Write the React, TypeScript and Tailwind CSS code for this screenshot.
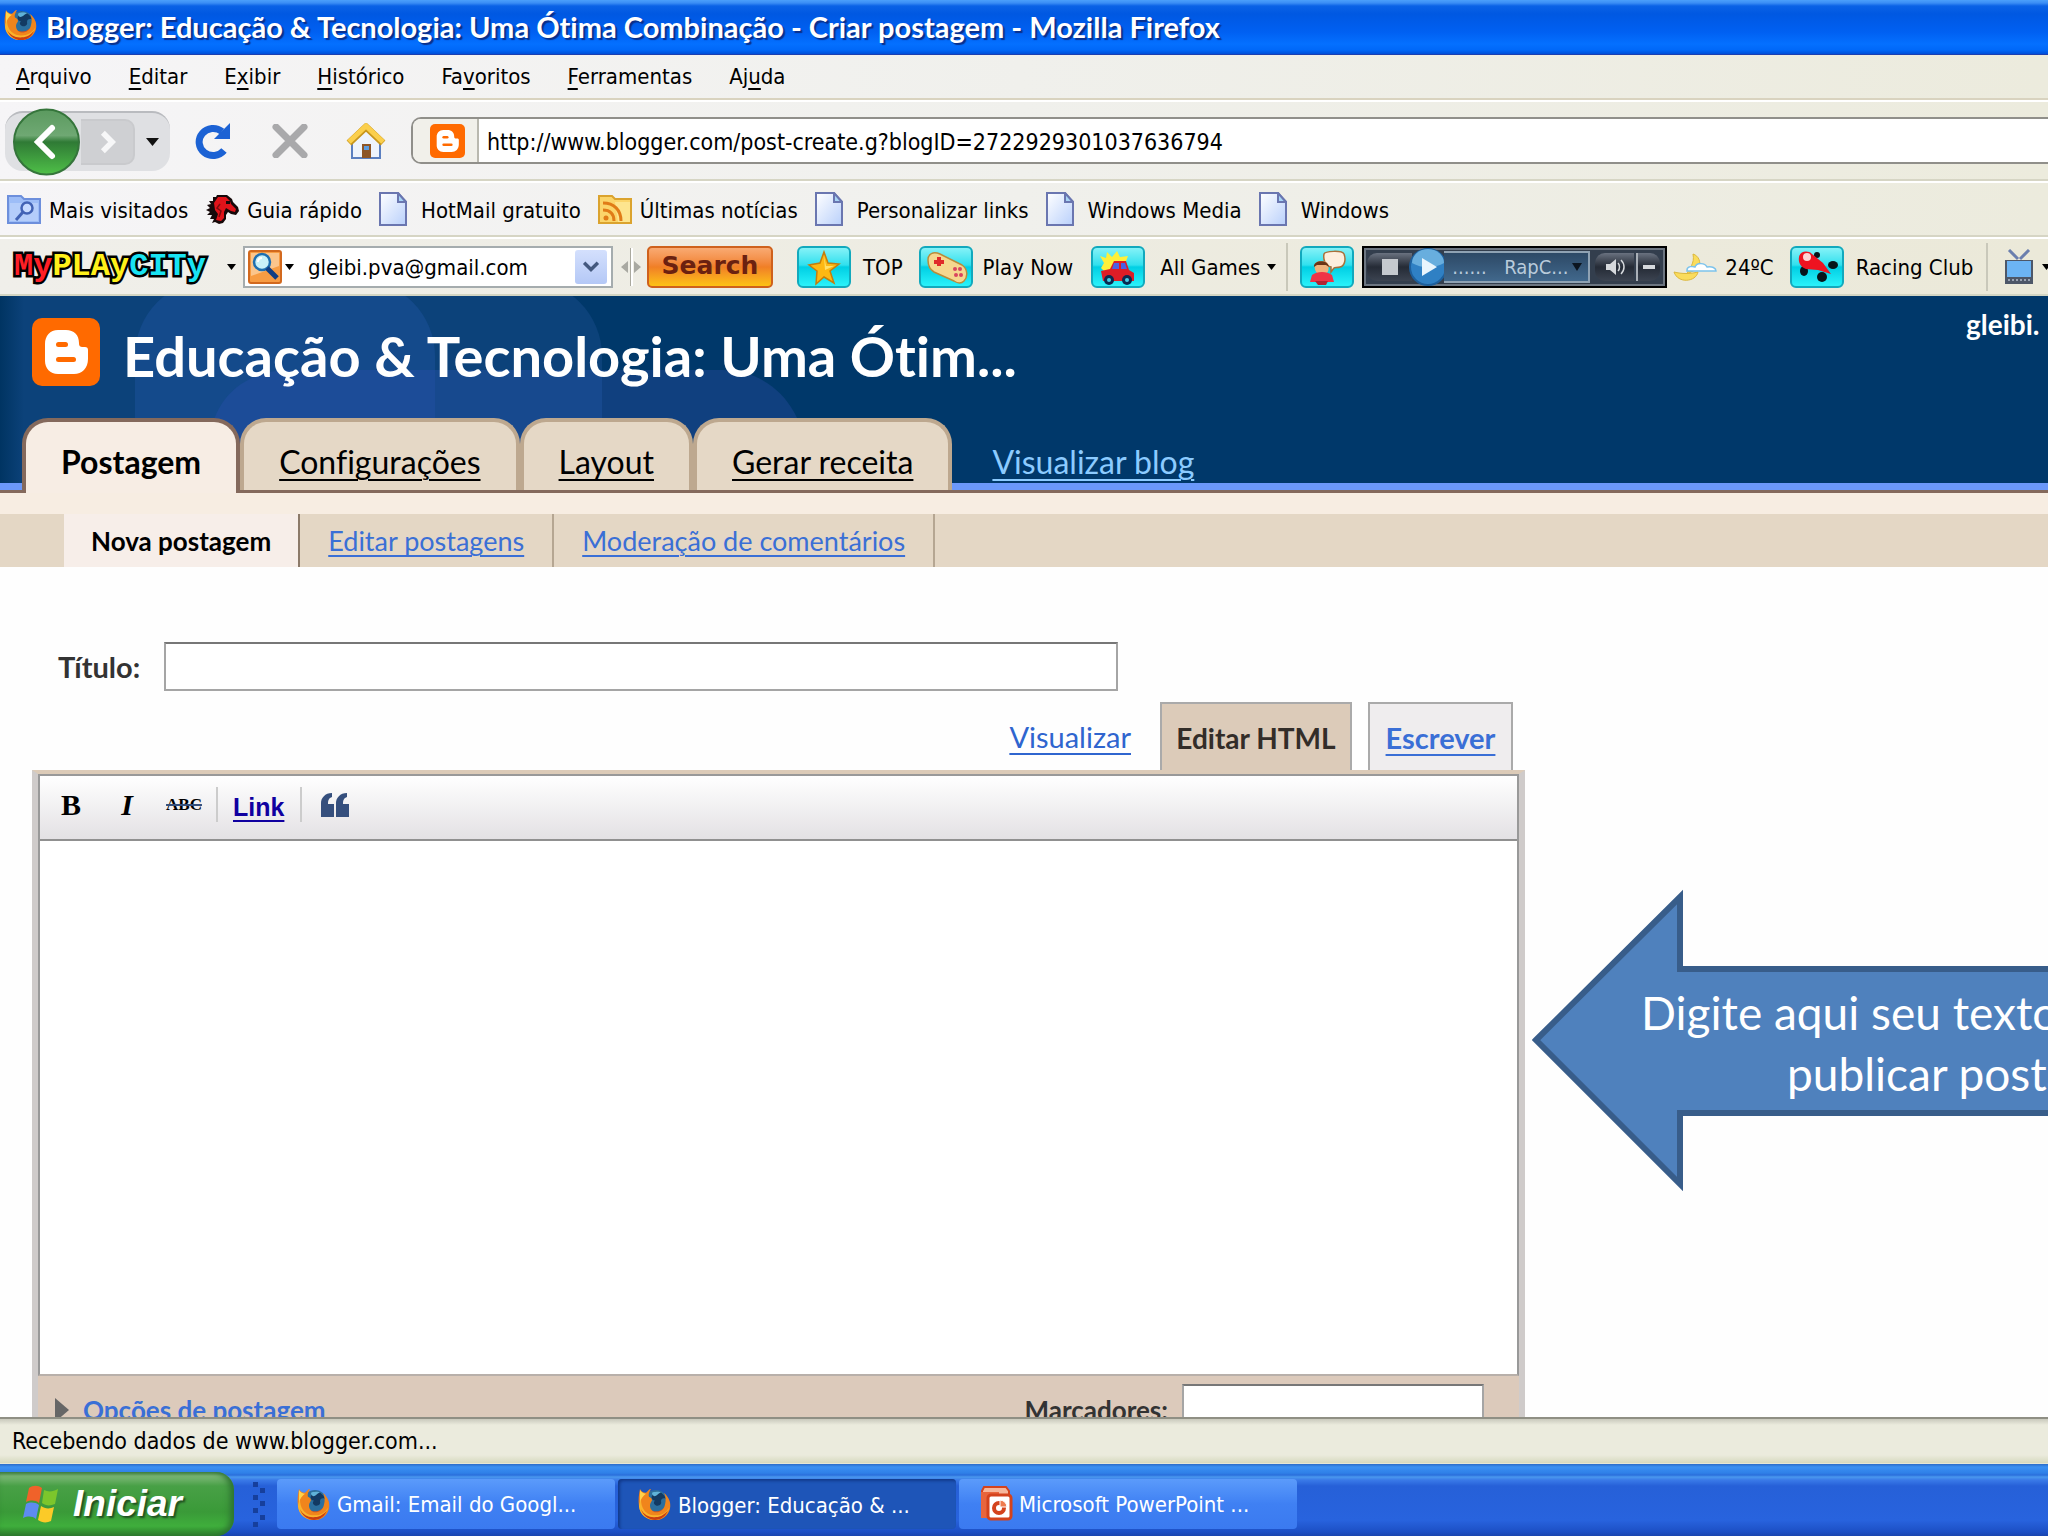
import React from "react";

const tahoma = "font-['DejaVu_Sans_Condensed','DejaVu_Sans',sans-serif]";
const trebuchet = "font-['Lato','Open_Sans',sans-serif] [font-variant-ligatures:none]";

function Firefox({ className }: { className: string }) {
  return (
    <svg viewBox="0 0 34 34" preserveAspectRatio="none" className={className} aria-hidden="true">
      <circle cx="17" cy="18" r="15" fill="#d9541a" />
      <circle cx="18" cy="13" r="11" fill="#2b6f9f" />
      <path d="M17 3c5 0 9 3 11 8-3-1-5 0-5 3 1 3-2 5-5 4-2-1-3-3-1-5-3 0-4-3-3-5z" fill="#123a63" />
      <path d="M14 5c3-2 7-2 9 0-2 0-3 2-5 3s-4 0-4-3z" fill="#5fb2d8" />
      <path d="M2 1c1 2 3 4 6 4 2-2 3-4 5-4-1 2-3 5-2 8 2 1 3 2 3 4-1 2-2 3-2 5 0 4 3 7 6 7 5 0 8-3 9-8 1-4 1-8-1-12 5 5 7 10 6 16-2 8-8 12-15 12S2 28 1 19C0 12 1 6 2 1z" fill="#f0851c" />
      <path d="M3 12c0 8 4 15 12 16 7 1 13-2 16-8-1 7-7 13-14 13C8 33 2 27 1 19c0-3 1-5 2-7z" fill="#f9b32c" />
      <path d="M3 22c3 6 9 9 15 8 5 0 9-3 12-7-2 6-7 10-13 10C10 33 5 28 3 22z" fill="#c93d12" />
      <path d="M2 2c1 2 4 4 6 4-3 2-5 5-6 9z" fill="#ffd24a" />
    </svg>
  );
}

function BloggerMark({ className }: { className: string }) {
  return (
    <svg viewBox="0 0 68 68" preserveAspectRatio="none" className={className} aria-hidden="true">
      <rect width="68" height="68" rx="10" fill="#ff6a00" />
      <path d="M26 12h8c8 0 13 5 13 13 0 3 1 4 4 4h2c2 0 3 1 3 3v9c0 9-6 15-14 15H26c-8 0-13-6-13-13V26c0-8 5-14 13-14z" fill="#fff" />
      <rect x="24" y="24" width="12" height="5" rx="2.500" fill="#ff6a00" />
      <rect x="24" y="39" width="20" height="5" rx="2.500" fill="#ff6a00" />
    </svg>
  );
}

function PageIcon() {
  return (
    <svg viewBox="0 0 28 34" className="h-[34px] w-7 shrink-0" aria-hidden="true">
      <defs>
        <linearGradient id="pg" x1="0" y1="0" x2="1" y2="1">
          <stop offset="0" stopColor="#fff" />
          <stop offset="1" stopColor="#b9d0fb" />
        </linearGradient>
      </defs>
      <path d="M1 1h18l8 9v23H1z" fill="url(#pg)" stroke="#6a76b0" strokeWidth="2" />
      <path d="M19 1v9h8z" fill="#a8d4f5" stroke="#6a76b0" strokeWidth="2" />
    </svg>
  );
}

function FolderSearch() {
  return (
    <svg viewBox="0 0 34 30" className="h-[30px] w-[34px] shrink-0" aria-hidden="true">
      <path d="M1 2h13l3 3h16v24H1z" fill="#9dbdf7" stroke="#6d8fdc" strokeWidth="2" />
      <path d="M3 9h28v18H3z" fill="#b4cdfa" />
      <circle cx="20" cy="14" r="5.500" fill="#c6daff" stroke="#4263b5" strokeWidth="2.500" />
      <path d="m16 18-7 8" stroke="#4263b5" strokeWidth="3" />
    </svg>
  );
}

function FolderFeed() {
  return (
    <svg viewBox="0 0 34 30" className="h-[30px] w-[34px] shrink-0" aria-hidden="true">
      <path d="M1 2h13l3 3h16v24H1z" fill="#fbd56a" stroke="#dba32e" strokeWidth="2" />
      <path d="M17 8h15v20H20z" fill="#fff0a8" opacity=".6" />
      <circle cx="8" cy="24" r="2.500" fill="#e07c17" />
      <path d="M5 16c7 0 11 4 11 11M5 9c11 0 18 7 18 18" fill="none" stroke="#e07c17" strokeWidth="3" />
    </svg>
  );
}

function Horse() {
  return (
    <svg viewBox="0 0 34 30" className="h-[30px] w-[34px] shrink-0" aria-hidden="true">
      <path d="M12 1h10l5 4 1 3 5 5 1 4-3 4-5-1-3-2-2 3v4l-3 4-4 1-4-2-3 1 2-4-4 0 2-4-5 0 3-3-4-2 4-2-3-3 4-1-2-3h4V3h3z" fill="#16090a" />
      <path d="M13 3h8l4 4 1 3 5 5-1 3-4-1-5-3-2 4v6l-3 3-5-1 2-6-3-4-1-7z" fill="#e0131a" />
      <path d="M21 7h4v3h-4z" fill="#16090a" />
      <path d="m15 10-3 4 4 3-2 6" stroke="#7c0b0f" strokeWidth="1.500" fill="none" />
    </svg>
  );
}

function Caret({ className }: { className: string }) {
  return (
    <svg viewBox="0 0 12 8" preserveAspectRatio="none" className={className} aria-hidden="true">
      <path d="M0 0h12L6 8z" fill="currentColor" />
    </svg>
  );
}

function Tile({ children }: { children: React.ReactNode }) {
  return (
    <svg viewBox="0 0 54 42" className="h-[42px] w-[54px] shrink-0" aria-hidden="true">
      <defs>
        <linearGradient id="tile" x1="0" y1="0" x2="0" y2="1">
          <stop offset="0" stopColor="#8af3f8" />
          <stop offset=".45" stopColor="#31e0ee" />
          <stop offset=".5" stopColor="#00cfe4" />
          <stop offset="1" stopColor="#2df4fb" />
        </linearGradient>
      </defs>
      <rect x="1" y="1" width="52" height="40" rx="5" fill="url(#tile)" stroke="#12a9bd" strokeWidth="2" />
      {children}
    </svg>
  );
}

const menu = [
  ["", "A", "rquivo"],
  ["", "E", "ditar"],
  ["E", "x", "ibir"],
  ["", "H", "istórico"],
  ["Fa", "v", "oritos"],
  ["", "F", "erramentas"],
  ["Aj", "u", "da"],
];

const bookmarks: { label: string; icon: React.ReactNode; gap: string }[] = [
  { label: "Mais visitados", icon: <FolderSearch />, gap: "gap-2" },
  { label: "Guia rápido", icon: <Horse />, gap: "gap-2" },
  { label: "HotMail gratuito", icon: <PageIcon />, gap: "gap-[14px]" },
  { label: "Últimas notícias", icon: <FolderFeed />, gap: "gap-2" },
  { label: "Personalizar links", icon: <PageIcon />, gap: "gap-[14px]" },
  { label: "Windows Media", icon: <PageIcon />, gap: "gap-[14px]" },
  { label: "Windows", icon: <PageIcon />, gap: "gap-[14px]" },
];

function NavigationBar() {
  return (
    <div className="flex h-[81px] items-center border-t-2 border-b-2 border-t-white border-b-[#d6d5c4]">
      <div className="relative ml-[5px] flex h-[60px] w-[165px] items-center rounded-[18px] border-t-2 border-[#b9bbbf] bg-[#dfe0e3]">
        <button aria-label="Voltar" className="relative -my-1 ml-[7px] h-[68px] w-[69px]">
          <svg viewBox="0 0 69 68" className="h-full w-full" aria-hidden="true">
            <defs>
              <linearGradient id="back" x1="0" y1="0" x2="0" y2="1">
                <stop offset="0" stopColor="#5b9a5f" />
                <stop offset=".4" stopColor="#6fa873" />
                <stop offset=".5" stopColor="#2f7a35" />
                <stop offset="1" stopColor="#4fc048" />
              </linearGradient>
            </defs>
            <circle cx="34.500" cy="34" r="32.500" fill="url(#back)" stroke="#35753b" strokeWidth="2" />
            <path d="M40 20 26 34l14 14" fill="none" stroke="#fff" strokeWidth="6" strokeLinecap="round" />
          </svg>
        </button>
        <button aria-label="Avançar" className="flex h-[46px] w-[54px] items-center justify-center rounded-r-[10px] border-2 border-l-0 border-[#c9cacd] bg-[#cfd0d3]">
          <svg viewBox="0 0 18 26" className="h-6 w-[17px]" aria-hidden="true">
            <path d="m4 3 10 10L4 23" fill="none" stroke="#f7f7f8" strokeWidth="6" />
          </svg>
        </button>
        <button aria-label="Histórico recente" className="ml-[11px] text-[#111]">
          <Caret className="h-2 w-[13px]" />
        </button>
      </div>
      <button aria-label="Recarregar" className="ml-[25px]">
        <svg viewBox="0 0 36 36" className="h-9 w-9" aria-hidden="true">
          <path d="M29 27.500A14 13.500 0 1 1 27 8.500" fill="none" stroke="#1c62d4" strokeWidth="7" />
          <path d="M35 0v16H19z" fill="#1c62d4" />
        </svg>
      </button>
      <button aria-label="Parar" className="ml-[41px]">
        <svg viewBox="0 0 36 34" className="h-[34px] w-9" aria-hidden="true">
          <path d="m4 3 28 28M32 3 4 31" stroke="#a9a9ab" strokeWidth="7" strokeLinecap="round" />
        </svg>
      </button>
      <button aria-label="Página inicial" className="ml-[38px]">
        <svg viewBox="0 0 40 36" className="h-9 w-10" aria-hidden="true">
          <path d="M6 17h28v18H6z" fill="#eef3fc" stroke="#5b7fc0" strokeWidth="2" />
          <path d="M20 7 8 19h24z" fill="#eef3fc" />
          <path d="m3 20 17-16 17 16" fill="none" stroke="#c8961c" strokeWidth="7" />
          <path d="m3 19 17-16 17 16" fill="none" stroke="#fbcf4c" strokeWidth="5" />
          <path d="M16 21h9v14h-9z" fill="#8d5527" />
          <path d="M18 23h5v4h-5z" fill="#5a9be0" />
        </svg>
      </button>
      <div className="ml-[25px] flex h-[47px] flex-1 items-center overflow-hidden rounded-l-[10px] border-2 border-r-0 border-[#908f8a] bg-white">
        <div className="flex h-full w-[66px] items-center justify-center border-r-2 border-[#b9b8af] bg-[#f1f0ea] pl-1">
          <BloggerMark className="h-[34px] w-[35px]" />
        </div>
        <input aria-label="Endereço" defaultValue="http://www.blogger.com/post-create.g?blogID=2722929301037636794" className="h-full min-w-0 flex-1 px-2 pt-[2px] text-[23px] outline-none" />
      </div>
    </div>
  );
}

function GamesToolbar() {
  return (
    <div className="flex h-[59px] items-center overflow-hidden border-t-2 border-b-2 border-t-white border-b-[#d3d5c3] bg-gradient-to-r from-[#f0efea] to-[#ebe9d9] whitespace-nowrap">
      <div className="ml-[13px] flex w-[194px] shrink-0 justify-center font-['Liberation_Mono',monospace] text-[32px] leading-9 font-bold [-webkit-text-stroke:5px_#000] [paint-order:stroke_fill]">
        <span className="text-[#ff1f26]">My</span>
        <span className="text-[#fff01a]">PLAy</span>
        <span className="text-[#19e3f2]">CITy</span>
      </div>
      <button aria-label="Menu MyPlayCity" className="ml-5"><Caret className="h-[6px] w-[9px]" /></button>
      <div className="ml-[7px] flex h-[42px] w-[370px] shrink-0 items-center border-2 border-[#a5acae] bg-white pl-[3px]">
        <svg viewBox="0 0 34 34" className="h-[34px] w-[34px] shrink-0" aria-hidden="true">
          <rect x="1" y="1" width="32" height="32" rx="2" fill="#f79c43" stroke="#d2691e" strokeWidth="2" />
          <path d="M3 3h28v13L3 26z" fill="#fbc58c" />
          <circle cx="14" cy="12" r="8" fill="#c9f1f8" stroke="#1f6fb0" strokeWidth="2.500" />
          <path d="m19 18 10 10" stroke="#113e83" strokeWidth="5" />
          <path d="M10 12c0-3 2-4 4-4" stroke="#fff" strokeWidth="2" fill="none" />
        </svg>
        <Caret className="ml-[3px] h-[6px] w-[9px] shrink-0" />
        <input aria-label="Pesquisar" defaultValue="gleibi.pva@gmail.com" className="ml-[14px] w-[267px] shrink-0 pt-[2px] text-[22px] outline-none" />
        <button aria-label="Abrir sugestões" className="flex h-[34px] w-8 shrink-0 items-center justify-center rounded-[3px] bg-gradient-to-b from-[#d4e0fd] to-[#b4c8f6]">
          <svg viewBox="0 0 20 14" className="h-3 w-[18px]" aria-hidden="true"><path d="m2 2 8 8 8-8" fill="none" stroke="#44597f" strokeWidth="4" /></svg>
        </button>
      </div>
      <svg viewBox="0 0 20 38" className="ml-2 h-[38px] w-5 shrink-0" aria-hidden="true">
        <path d="M7 13v12l-7-6zM13 13v12l7-6z" fill="#a9a9a2" />
        <path d="M9 0h1v38H9z" fill="#aaa99e" />
        <path d="M10 0h2v38h-2z" fill="#fff" />
      </svg>
      <button className="ml-[6px] flex h-[42px] w-[126px] shrink-0 items-center justify-center rounded-[5px] border-2 border-[#cf611c] bg-gradient-to-b from-[#f9aa72] via-[#f07f25] to-[#fcc214] pb-[2px] font-['DejaVu_Sans',sans-serif] text-[25px] leading-8 font-bold text-[#6b2110]">
        Search
      </button>
      <button className="ml-6 flex shrink-0 items-center gap-3">
        <Tile>
          <path d="m27 6 4 11 11 1-9 7 4 12-10-6-8 7 1-13-8-6 11-2z" fill="#fdb813" stroke="#c47d0d" strokeWidth="1.500" />
          <path d="m27 10 2 10 8 0-9 4z" fill="#ffe169" />
        </Tile>
        <span className="pt-[2px]">TOP</span>
      </button>
      <button className="ml-4 flex shrink-0 items-center gap-[10px]">
        <Tile>
          <path d="M9 14c0-6 5-9 12-6l22 11c6 4 6 12 2 16-3 3-7 2-10 0L15 26c-5-3-6-7-6-12z" fill="#f5d78f" stroke="#b98d3b" strokeWidth="1.500" />
          <path d="M20 11v9M15 16h10" stroke="#e02a2a" strokeWidth="4" />
          <g fill="#d9455f"><circle cx="36" cy="23" r="2" /><circle cx="41" cy="23" r="2" /><circle cx="37" cy="29" r="2" /><circle cx="42" cy="29" r="2" /></g>
        </Tile>
        <span className="pt-[2px]">Play Now</span>
      </button>
      <button className="ml-[18px] flex shrink-0 items-center gap-[15px]">
        <Tile>
          <path d="m9 10 6 2 1-6 5 5 5-6 3 6 8-1-3 8 2 6-9 2-13 0-4-4 3-5z" fill="#fff03a" />
          <path d="M10 25l9-2 4-8h12l3 9 5 3v8H12z" fill="#dc1d26" />
          <path d="M23 17h5v6h-7zM30 17h4l2 6h-6z" fill="#4a62e4" />
          <circle cx="18" cy="34" r="5" fill="#0a2a50" /><circle cx="36" cy="34" r="5" fill="#0a2a50" />
          <circle cx="18" cy="34" r="2" fill="#48d0e8" /><circle cx="36" cy="34" r="2" fill="#48d0e8" />
        </Tile>
        <span className="pt-[2px]">All Games</span>
        <Caret className="-ml-2 h-[6px] w-[9px]" />
      </button>
      <span className="ml-[10px] h-12 w-[2px] shrink-0 bg-[#c9c8ba]" />
      <button aria-label="Chat" className="ml-3 shrink-0">
        <Tile>
          <path d="M24 8c1-3 18-4 20 0 2 5 1 12-4 13-3 1-5 0-6 1l-3 4v-5c-6-1-8-8-7-13z" fill="#fdeedd" stroke="#a8703a" strokeWidth="1.500" />
          <path d="M15 18c1-4 12-4 13 0 1 3 1 7-1 9H17c-2-2-3-6-2-9z" fill="#f0b27c" />
          <path d="M14 21c-1-7 14-8 15 0l-3-2H17z" fill="#6b3517" />
          <path d="M12 29c5-4 15-4 20 0l2 7H10z" fill="#ef3446" />
          <path d="M15 35h13l-2 4h-8z" fill="#b12433" />
        </Tile>
      </button>
      <div className="ml-2 flex h-[42px] w-[305px] shrink-0 items-center border-2 border-black bg-[#333e4d] pl-[3px] text-[#b9cbdb] shadow-[inset_0_0_0_2px_#6d7681]">
        <button aria-label="Parar música" className="flex h-7 w-[45px] shrink-0 items-center justify-center rounded-l-[10px] bg-gradient-to-b from-[#6a7280] via-[#252b36] to-[#3c4451]">
          <span className="h-4 w-4 bg-[#c5c9ce]" />
        </button>
        <button aria-label="Tocar" className="-mx-[3px] shrink-0">
          <svg viewBox="0 0 38 38" className="h-[38px] w-[38px]" aria-hidden="true">
            <circle cx="19" cy="19" r="18" fill="#2f80c4" stroke="#1d5f9c" strokeWidth="2" />
            <path d="M3 15a16 14 0 0 1 32 0c-8 5-22 6-32 0z" fill="#68aede" />
            <path d="M13 10v18l15-9z" fill="#e9f5fd" />
          </svg>
        </button>
        <div className="flex h-8 w-[146px] shrink-0 items-center justify-between border-2 border-l-0 border-[#8fa2b3] bg-gradient-to-b from-[#2d4966] to-[#41688c] pr-[6px] pl-2 text-[20px] leading-7">
          <span>......</span>
          <span className="flex items-center gap-1">RapC...<Caret className="h-2 w-[10px] text-[#0c1520]" /></span>
        </div>
        <button aria-label="Volume" className="ml-[5px] flex h-7 w-[39px] shrink-0 items-center justify-center rounded-l-[10px] bg-gradient-to-b from-[#6a7280] via-[#252b36] to-[#3c4451]">
          <svg viewBox="0 0 20 20" className="h-5 w-5" aria-hidden="true">
            <path d="M1 7h4l6-5v16l-6-5H1z" fill="#d5d8dc" />
            <path d="M13 6c2 2 2 6 0 8M16 3c4 4 4 10 0 14" fill="none" stroke="#d5d8dc" strokeWidth="1.500" />
          </svg>
        </button>
        <button aria-label="Minimizar" className="ml-[2px] flex h-7 w-6 shrink-0 items-center justify-center rounded-r-[10px] border-l-2 border-[#aab0b8] bg-gradient-to-b from-[#6a7280] via-[#252b36] to-[#3c4451]">
          <span className="h-1 w-3 bg-[#d5d8dc]" />
        </button>
      </div>
      <svg viewBox="0 0 44 30" className="ml-[6px] h-[30px] w-11 shrink-0" aria-hidden="true">
        <path d="M20 2c6 2 8 8 6 14l-12 6c2-6 8-10 6-20z" fill="#fadc5c" stroke="#dcb83c" />
        <path d="M1 20c8 2 16 2 24 0-2 10-20 12-24 0z" fill="#fadc5c" stroke="#dcb83c" />
        <path d="M14 18c0-4 6-4 8-3 2-5 10-4 12 0 5-1 9 1 9 4H14z" fill="#fff" stroke="#7cc3ec" strokeWidth="1.500" />
      </svg>
      <span className="ml-2 pt-[2px]">24ºC</span>
      <button className="ml-4 flex shrink-0 items-center gap-3">
        <Tile>
          <g fill="#07151a"><ellipse cx="14" cy="25" rx="4" ry="5" /><ellipse cx="27" cy="9" rx="3" ry="3" /><ellipse cx="43" cy="19" rx="5" ry="4" /><ellipse cx="32" cy="31" rx="5" ry="5" /></g>
          <path d="M9 11c1-6 9-7 13-3l11 9 8 11-13-4-12-1c-5-2-8-6-7-12z" fill="#ee1320" />
          <circle cx="17" cy="11" r="4" fill="#ffd5d5" />
        </Tile>
        <span className="pt-[2px]">Racing Club</span>
      </button>
      <span className="ml-[13px] h-12 w-[2px] shrink-0 bg-[#c9c8ba]" />
      <button aria-label="TV" className="ml-4 flex shrink-0 items-center gap-2">
        <svg viewBox="0 0 30 36" className="h-9 w-[30px]" aria-hidden="true">
          <path d="m5 1 9 9M25 1l-9 9" stroke="#6b7fae" strokeWidth="3" />
          <rect x="1" y="11" width="28" height="24" fill="#4d5768" />
          <rect x="3" y="12" width="24" height="16" fill="#6cb4f4" />
          <path d="M4 31h22" stroke="#9aa3b2" strokeWidth="2" strokeDasharray="2 2" />
        </svg>
        <Caret className="h-[6px] w-[9px]" />
      </button>
    </div>
  );
}

function Tab({ children }: { children: React.ReactNode }) {
  return (
    <a href="#" className="flex h-[72px] items-end rounded-t-[26px] border-4 border-b-0 border-[#bda88f] bg-[#e5d8c6] px-[35px] pb-[10px] leading-9 text-black">
      <span className="underline decoration-2 underline-offset-[5px]">{children}</span>
    </a>
  );
}

function BloggerHeader() {
  return (
    <header className={`relative shrink-0 overflow-hidden bg-[#00386a] ${trebuchet}`}>
      <svg viewBox="0 0 960 197" className="absolute top-0 left-0 h-[197px] w-[960px]" aria-hidden="true">
        <defs>
          <linearGradient id="edge" x1="0" y1="0" x2="1" y2="0">
            <stop offset="0" stopColor="#003462" />
            <stop offset="1" stopColor="#0c427a" />
          </linearGradient>
        </defs>
        <rect x="-100" y="-16" width="702" height="300" rx="76" fill="#0c427a" />
        <rect x="0" y="0" width="24" height="197" fill="url(#edge)" />
        <path d="M602 74h120c50 0 84 40 84 90v40H602z" fill="#10407f" />
        <rect x="435" y="74" width="167" height="140" fill="#17498e" />
        <rect x="135" y="-16" width="300" height="300" rx="76" fill="#144a8b" />
        <path d="M290 74h145v140H209v-60c0-50 35-80 81-80z" fill="#1c4c98" />
      </svg>
      <div className="relative flex h-[122px] items-start">
        <BloggerMark className="mt-[22px] ml-8 h-[68px] w-[68px]" />
        <h1 className="mt-[26px] ml-[23px] flex-1 text-[56px] leading-[68px] font-bold whitespace-nowrap text-white">Educação &amp; Tecnologia: Uma Ótim...</h1>
        <span className="mt-3 w-[82px] text-[28px] leading-8 font-bold whitespace-nowrap text-white">gleibi.</span>
      </div>
      <nav aria-label="Blog" className="relative flex h-[75px] items-start text-[32px]">
        <div className="absolute inset-x-0 bottom-0 h-[10px] border-b-[3px] border-[#84695c] bg-[#6b98fa]" />
        <a href="#" className="relative ml-[22px] flex h-[75px] items-end rounded-t-[26px] border-4 border-b-0 border-[#84695c] bg-[#f7ede4] px-[35px] pb-[13px] leading-9 font-bold text-black">Postagem</a>
        <div className="relative flex">
          <Tab>Configurações</Tab>
          <Tab>Layout</Tab>
          <Tab>Gerar receita</Tab>
        </div>
        <a href="#" className="relative mt-[26px] ml-10 leading-9 text-[#8ccbff] underline decoration-2 underline-offset-[5px]">Visualizar blog</a>
      </nav>
    </header>
  );
}

function SubNavigation() {
  const link = "flex h-full items-center border-r-2 border-[#b5a692] px-[28px] pt-[2px] text-[#3a6fd6] underline decoration-2 underline-offset-4";
  return (
    <div className={`shrink-0 bg-[#f7ede2] pt-[21px] ${trebuchet}`}>
      <nav aria-label="Postagem" className="flex h-[53px] items-center bg-[#e4d7c5] pl-16 text-[27px]">
        <span className="flex h-full items-center border-r-2 border-[#8c7a69] bg-[#f7eee9] px-[27px] pt-[2px] text-[26px] font-bold text-black">Nova postagem</span>
        <a href="#" className={link}>Editar postagens</a>
        <a href="#" className={link}>Moderação de comentários</a>
      </nav>
    </div>
  );
}

function Editor() {
  return (
    <form className={`flex min-h-0 flex-1 flex-col pl-8 ${trebuchet}`}>
      <div className="mt-[75px] flex items-center">
        <label htmlFor="titulo" className="ml-[26px] w-[106px] text-[29px] font-bold text-[#333]">Título:</label>
        <input id="titulo" className="h-[49px] w-[954px] border-2 border-[#a5a5a5] border-t-[#777] bg-white px-2 text-[26px]" />
      </div>
      <div className="mt-[11px] flex h-[68px] w-[1481px] items-stretch justify-end">
        <a href="#" className="mr-[29px] self-center pt-[2px] text-[29px] text-[#2f65cf] underline decoration-2 underline-offset-[5px]">Visualizar</a>
        <button type="button" className="mr-4 flex w-[192px] items-center justify-center border-2 border-b-0 border-[#aaa] bg-[#dccbb9] pt-[2px] text-[28px] font-bold text-[#332d29]">Editar HTML</button>
        <button type="button" className="flex w-[145px] items-center justify-center border-2 border-b-0 border-[#aaa] bg-[#efedee] pt-[2px] text-[29px] font-bold text-[#3a6fd6] underline decoration-2 underline-offset-[5px]">Escrever</button>
      </div>
      <div className="flex min-h-0 w-[1493px] flex-1 flex-col border-x-[6px] border-t-4 border-x-[#cfcbca] border-t-[#dccbb8] bg-[#dccabb]">
        <div className="flex min-h-0 flex-1 flex-col border-2 border-[#999] border-b-[#b8b0aa]">
          <div className="flex h-[65px] shrink-0 items-center border-b-2 border-[#909090] bg-gradient-to-b from-white to-[#e3e1e4] pb-[6px]">
            <button type="button" aria-label="Negrito" className="ml-[21px] w-5 font-['Liberation_Serif',serif] text-[30px] font-bold text-black">B</button>
            <button type="button" aria-label="Itálico" className="ml-[38px] w-4 font-['Liberation_Serif',serif] text-[30px] font-bold text-black italic">I</button>
            <button type="button" aria-label="Tachado" className="ml-[31px] w-9 font-['Liberation_Serif',serif] text-[17px] font-bold text-black line-through decoration-[#35507c] decoration-2">ABC</button>
            <span className="ml-[14px] h-[35px] w-[2px] bg-[#ccc]" />
            <button type="button" className="ml-[15px] pt-[6px] font-['Liberation_Sans',sans-serif] text-[25px] font-bold text-[#1000a0] underline decoration-2 underline-offset-4">Link</button>
            <span className="ml-4 h-[35px] w-[2px] bg-[#ccc]" />
            <button type="button" aria-label="Citação" className="ml-[19px]">
              <svg viewBox="0 0 28 24" className="h-6 w-7" aria-hidden="true">
                <path d="M0 24V10C0 5 4 0 11 0v4C8 5 7 7 7 11h6v13zM15 24V10c0-5 4-10 11-10v4c-3 1-4 3-4 7h6v13z" fill="#354f7d" />
              </svg>
            </button>
          </div>
          <textarea aria-label="Texto da postagem" className="min-h-0 flex-1 resize-none bg-white p-3 text-[26px] outline-none" />
        </div>
        <div className="flex h-[41px] shrink-0 items-start overflow-hidden pt-2 pl-[17px] text-[26px] leading-9 font-bold">
          <svg viewBox="0 0 14 24" className="mt-[14px] h-6 w-[14px]" aria-hidden="true"><path d="M0 0v24l14-12z" fill="#666" /></svg>
          <a href="#" className="mt-2 ml-[14px] text-[#3a6fd6]">Opções de postagem</a>
          <label htmlFor="marcadores" className="mt-2 mr-[14px] ml-auto text-[#333]">Marcadores:</label>
          <input id="marcadores" className="mr-[35px] h-12 w-[302px] border-2 border-[#a5a5a5] border-t-[#777] bg-white" />
        </div>
      </div>
    </form>
  );
}

function ArrowCallout() {
  return (
    <div className="absolute top-[593px] right-0 left-[1532px] h-[302px] overflow-hidden">
      <svg viewBox="0 0 700 302" className="absolute top-0 left-0 h-[302px] w-[700px]" aria-hidden="true">
        <path d="M4 151 148 8v72h600v144H148v71z" fill="#4f81bd" stroke="#385d8a" strokeWidth="6" />
      </svg>
      <p className="relative pt-[93px] pl-[109px] font-['Lato',sans-serif] text-[46px] leading-[61px] whitespace-nowrap text-white">
        Digite aqui seu texto
        <br />
        <span className="pl-[146px]">publicar postagem</span>
      </p>
    </div>
  );
}

function WindowsFlag() {
  return (
    <svg viewBox="0 0 40 40" className="h-10 w-10" aria-hidden="true">
      <path d="M7 4c4-3 9-3 13 0l-3 15c-4-3-8-3-13-1z" fill="#f0622a" />
      <path d="M22 6c4 2 9 2 14-1l-3 15c-5 2-9 2-13-1z" fill="#7cc62c" />
      <path d="M4 20c4-2 9-2 13 1l-3 14c-4-3-8-3-13-1z" fill="#5e8bf0" />
      <path d="M19 22c4 3 9 3 13 1l-3 14c-4 2-9 2-13-1z" fill="#fbca28" />
    </svg>
  );
}

function Taskbar() {
  const item = "flex h-[50px] w-[338px] items-center gap-[6px] rounded-[4px] pl-5 text-white";
  return (
    <footer className="flex h-[72px] shrink-0 items-end bg-[linear-gradient(180deg,#2a6bc8_0px,#3a90f2_3px,#2f80e8_9px,#2a6fdc_11px,#4a98ee_13px,#3a7ae8_16px,#2660d8_22px,#2863de_56px,#1c4fc4_68px,#1a45ae_72px)] text-[22px]">
      <button className="flex h-16 w-[234px] items-center rounded-r-[18px] bg-[linear-gradient(180deg,#4f8a4c_0px,#7db877_4px,#48a046_14px,#3a9a38_40px,#3fae3c_54px,#2c7c2c_64px)] pl-[22px] shadow-[inset_-4px_0_6px_#2d7330]">
        <WindowsFlag />
        <span className="ml-[11px] font-['Liberation_Sans',sans-serif] text-[37px] leading-10 font-bold text-white italic [text-shadow:2px_2px_2px_#1f4f20]">Iniciar</span>
      </button>
      <svg viewBox="0 0 14 46" className="mb-2 ml-[19px] h-[46px] w-[14px]" aria-hidden="true">
        <g fill="#163f9c">
          <path d="M0 0h5v5H0zM7 6h5v5H7zM0 13h5v5H0zM7 19h5v5H7zM0 26h5v5H0zM7 33h5v5H7zM0 40h5v5H0z" />
        </g>
      </svg>
      <div className="mb-[7px] ml-[10px] flex gap-[3px]">
        <button className={`${item} bg-gradient-to-b from-[#5b9bfb] via-[#3f80f3] to-[#3b7af0]`}><Firefox className="h-[33px] w-[34px]" />Gmail: Email do Googl...</button>
        <button className={`${item} bg-[#1e55b8] shadow-[inset_2px_2px_3px_#123a8c]`}><Firefox className="h-[33px] w-[34px]" /><span className="mt-[3px]">Blogger: Educação &amp; ...</span></button>
        <button className={`${item} bg-gradient-to-b from-[#5b9bfb] via-[#3f80f3] to-[#3b7af0]`}>
          <svg viewBox="0 0 34 36" className="h-9 w-[34px]" aria-hidden="true">
            <path d="M5 1h22l3 4v8H3V5z" fill="#f6b79c" stroke="#d4431d" strokeWidth="2" />
            <path d="M2 6h18v26H2z" fill="#e8653c" />
            <rect x="9" y="9" width="23" height="24" rx="3" fill="#fff" stroke="#d4431d" strokeWidth="3" />
            <circle cx="20" cy="22" r="5" fill="none" stroke="#d4431d" strokeWidth="4" />
            <path d="M21 14a8 8 0 0 1 7 7h-7z" fill="#ee7b4f" stroke="#fff" />
          </svg>
          Microsoft PowerPoint ...
        </button>
      </div>
    </footer>
  );
}

export default function App() {
  return (
    <div className={`flex h-screen flex-col overflow-hidden bg-white text-[22px] text-black ${tahoma}`}>
      <div className="flex h-[55px] shrink-0 items-center gap-2 border-b border-[#1c3fb0] bg-[linear-gradient(180deg,#4ba0fb_0px,#3a8df5_3px,#0a62e6_6px,#0058e2_14px,#0060f2_32px,#0470ff_44px,#0068f8_50px,#0048d0_55px)] pl-1">
        <Firefox className="mb-1 h-8 w-[34px]" />
        <span className={`text-[29px] leading-9 font-bold whitespace-nowrap text-white [text-shadow:2px_2px_1px_#0a2f8a] ${trebuchet}`}>
          Blogger: Educação &amp; Tecnologia: Uma Ótima Combinação - Criar postagem - Mozilla Firefox
        </span>
      </div>
      <div className="shrink-0 bg-gradient-to-r from-[#f6f5f7] via-[#f0f0ec] to-[#ecebdd]">
        <div role="menubar" className="flex h-[45px] items-center gap-[37px] border-b-2 border-[#d9d3bf] pl-4">
          {menu.map(([before, key, after]) => (
            <button key={after} role="menuitem">{before}<span className="underline decoration-2 underline-offset-4">{key}</span>{after}</button>
          ))}
        </div>
        <NavigationBar />
        <div className="flex h-14 items-center gap-[17px] border-t-2 border-b-2 border-t-white border-b-[#d6d5c4] pl-[7px] whitespace-nowrap">
          {bookmarks.map((b) => (
            <a key={b.label} href="#" className={`flex items-center ${b.gap}`}>{b.icon}<span className="pt-[2px]">{b.label}</span></a>
          ))}
        </div>
        <GamesToolbar />
      </div>
      <main className="relative flex min-h-0 flex-1 flex-col overflow-hidden bg-[#fefefe]">
        <BloggerHeader />
        <SubNavigation />
        <Editor />
        <ArrowCallout />
      </main>
      <div role="status" className="flex h-[47px] shrink-0 items-center border-t-2 border-[#8f8f84] bg-[linear-gradient(180deg,#c9c9bc_0px,#ebebdd_6px,#ebebdd_36px,#d6d9be_44px,#f4f4ec_45px)] pl-3 text-[23px]">
        Recebendo dados de www.blogger.com...
      </div>
      <Taskbar />
    </div>
  );
}
